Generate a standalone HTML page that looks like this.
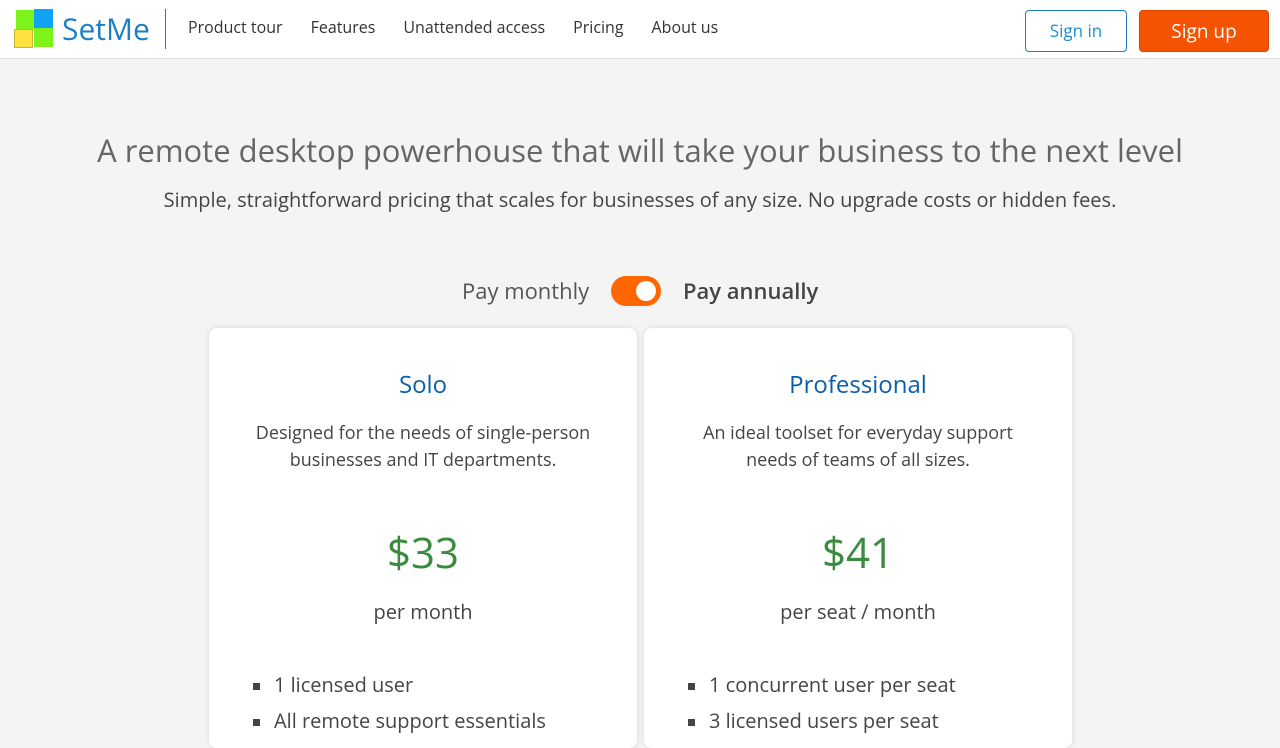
<!DOCTYPE html>
<html><head><meta charset="utf-8"><style>
*{margin:0;padding:0;box-sizing:border-box}
body{width:1280px;height:720px;overflow:hidden;background:#f4f4f4;font-family:"Open Sans","Liberation Sans",sans-serif;color:#444}
.nav{height:59px;background:#fff;border-bottom:1px solid #ddd;position:relative}
.logo{position:absolute;left:14px;top:9px;width:40px;height:40px}
.logo div{position:absolute;width:19px;height:19px}
.brand{position:absolute;left:62px;top:8px;font-size:30px;color:#1a7fc4}
.sep{position:absolute;left:165px;top:9px;width:1px;height:40px;background:#666}
.links{position:absolute;left:188px;top:16px;font-size:16px;color:#333;white-space:nowrap}
.links span{margin-right:28px}
.btn{position:absolute;top:10px;height:42px;border-radius:4px;font-size:18px;text-align:center;line-height:40px}
h1{position:absolute;top:130px;width:100%;text-align:center;font-weight:normal;font-size:31px;color:#666}
.sub{position:absolute;top:186px;width:100%;text-align:center;font-size:20px;color:#444}
.tog{position:absolute;top:276px;font-size:22px}
.card{position:absolute;top:328px;width:428px;height:420px;background:#fff;border-radius:8px;box-shadow:0 0 6px rgba(0,0,0,.12);text-align:center}
.card h2{font-weight:normal;font-size:24px;color:#0a5ea8;margin-top:40px}
.card p{font-size:18px;line-height:27px;margin-top:19px;color:#444}
.price{font-size:42px;color:#3a8a3f;margin-top:50px}
.per{font-size:20px;margin-top:17px}
.card ul{position:absolute;left:44px;top:339px;text-align:left;list-style:none;font-size:20px}
.card li{line-height:36px;position:relative;padding-left:21px}
.card li:before{content:"";position:absolute;left:0;top:16px;width:7px;height:7px;background:#444}
</style></head><body>
<div class="nav">
<div class="logo"><div style="left:2px;top:1px;background:#7df21b"></div><div style="left:20px;top:0;background:#0fa4f5"></div><div style="left:0;top:20px;background:#fde240;border:1px solid #c9b43a"></div><div style="left:20px;top:19px;background:#7df21b"></div></div>
<div class="brand">SetMe</div><div class="sep"></div>
<div class="links"><span>Product tour</span><span>Features</span><span>Unattended access</span><span>Pricing</span><span>About us</span></div>
<div class="btn" style="left:1025px;width:102px;border:1px solid #1a7fc4;color:#1a8fd4;font-size:17px">Sign in</div>
<div class="btn" style="left:1139px;width:130px;background:#f55202;color:#fff;border:1px solid #d94400;font-size:19px">Sign up</div>
</div>
<h1>A remote desktop powerhouse that will take your business to the next level</h1>
<div class="sub">Simple, straightforward pricing that scales for businesses of any size. No upgrade costs or hidden fees.</div>
<div class="tog" style="left:462px;color:#555">Pay monthly</div>
<div style="position:absolute;left:611px;top:276px;width:50px;height:30px;border-radius:15px;background:#ff6600"><div style="position:absolute;left:25px;top:5px;width:20px;height:20px;border-radius:50%;background:#fff"></div></div>
<div class="tog" style="left:683px;font-weight:600;color:#444">Pay annually</div>
<div class="card" style="left:209px"><h2>Solo</h2><p>Designed for the needs of single-person<br>businesses and IT departments.</p><div class="price">$33</div><div class="per">per month</div><ul><li>1 licensed user</li><li>All remote support essentials</li></ul></div>
<div class="card" style="left:644px"><h2>Professional</h2><p>An ideal toolset for everyday support<br>needs of teams of all sizes.</p><div class="price">$41</div><div class="per">per seat / month</div><ul><li>1 concurrent user per seat</li><li>3 licensed users per seat</li></ul></div>
</body></html>
